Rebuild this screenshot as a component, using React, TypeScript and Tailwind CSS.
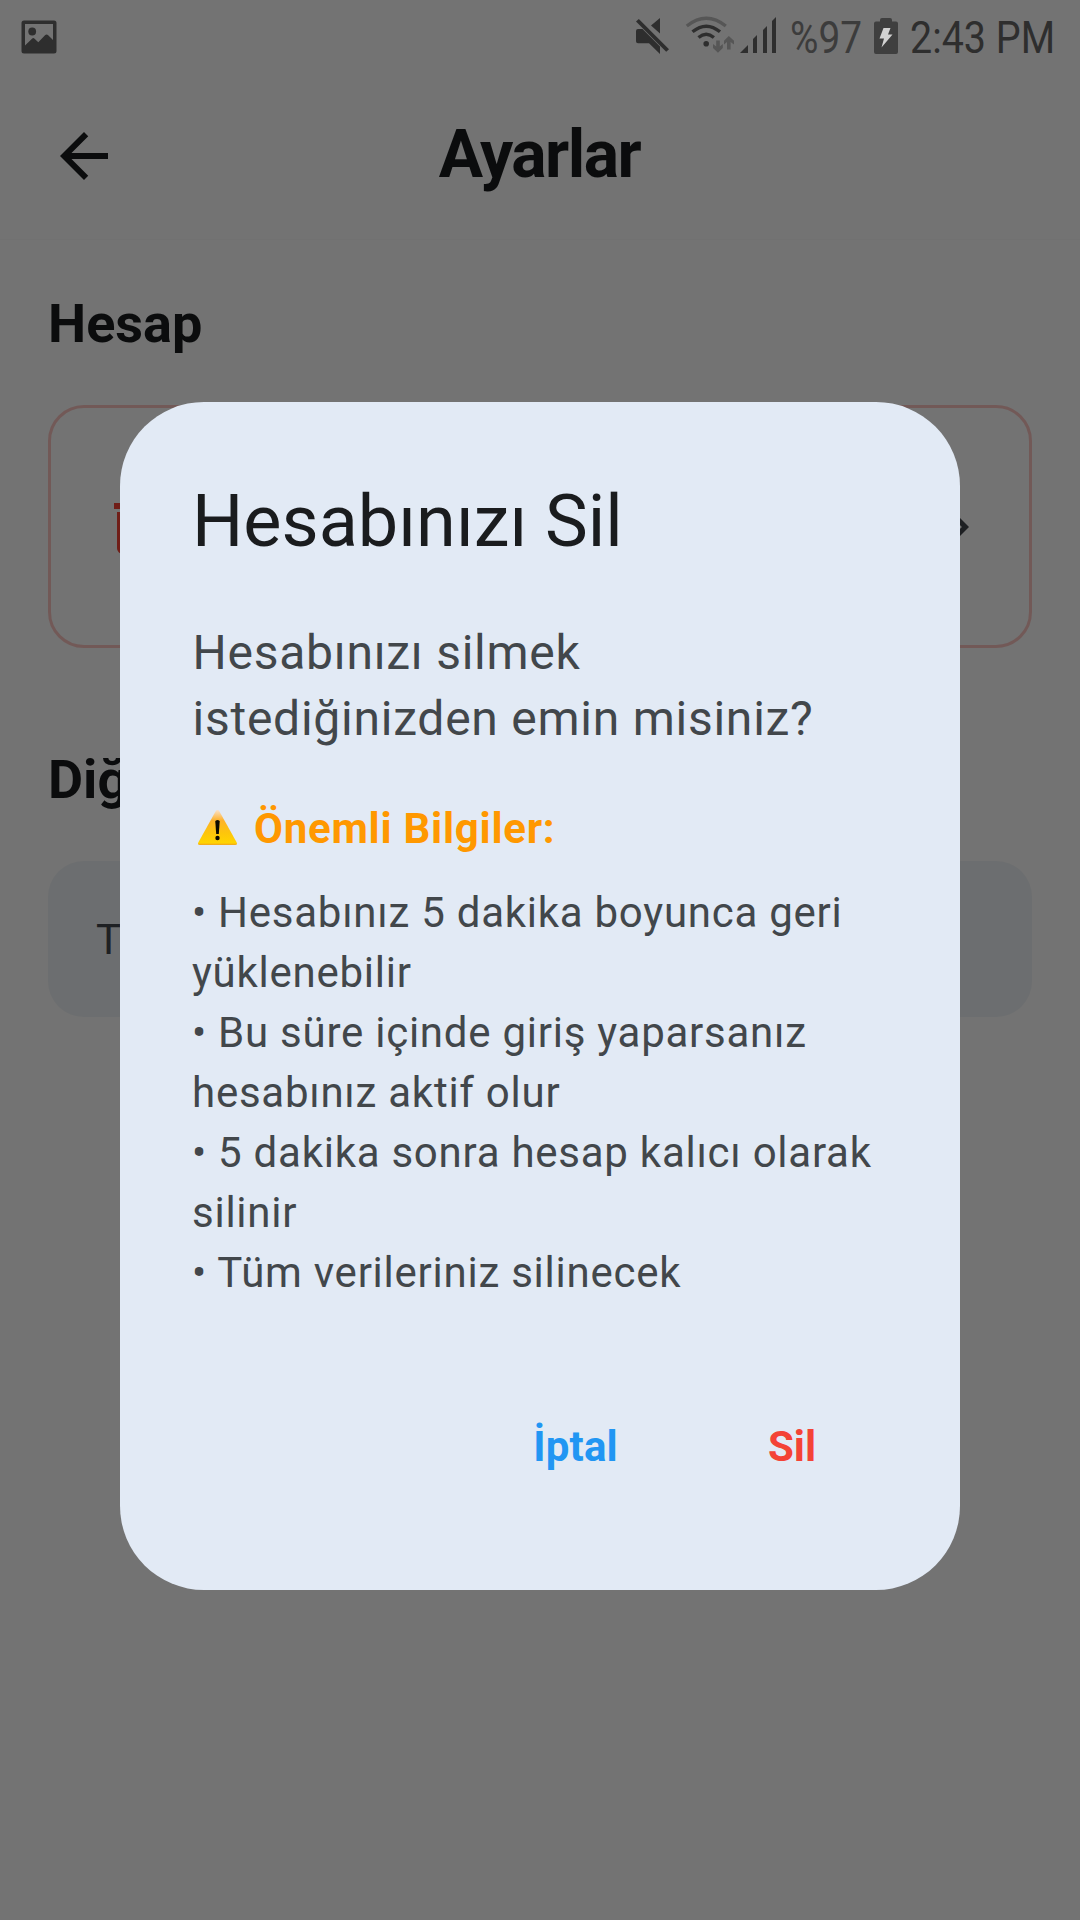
import React from "react";
import { MdArrowBack, MdArrowForwardIos, MdDeleteOutline } from "react-icons/md";

function StatusBar() {
  return (
    <div className="relative z-20 flex h-[72px] items-center justify-between text-[#2e2e2e]">
      <svg className="ml-[21px] h-[35px] w-[36px]" viewBox="0 0 36 35">
        <path
          fill="currentColor"
          fillRule="evenodd"
          d="M3 1.5h30a2.5 2.5 0 0 1 2.500 2.500v28a2.500 2.500 0 0 1-2.500 2.500H3A2.500 2.500 0 0 1 .5 32V4A2.500 2.500 0 0 1 3 1.500zM4 5v21.500l7-6.800q1.300-1.200 2.600 0l3.700 3.500 6.700-7q1.600-1.500 3.200 0l4.800 4.800V5z"
        />
        <circle cx="11.200" cy="12.500" r="3.900" fill="currentColor" />
      </svg>
      <div className="flex h-full">
        <svg className="h-[72px] w-[164px]" viewBox="620 0 164 72">
          <g fill="currentColor">
            <path d="M651 25.500L660 18v15.500zM638 29h4.500L660 46.500V54l-11-10.700h-11q-2 0-2-2V31q0-2 2-2z" />
            <path d="M638.800 19L669 49.200l-2.800 2.600-30.200-30.300z" />
            <circle cx="706.200" cy="43.700" r="2.800" />
            <path d="M740 53l8-8v8zM753 39l4-4v18h-4zM763 30l4-4v27h-4zM772 21l4-4v36h-4z" />
          </g>
          <g fill="none" stroke="currentColor" strokeWidth="3.400">
            <path d="M698.500 37.500q7.700-6.300 15.400 0" />
            <path d="M692.500 31.800q13.800-11.200 27.500 0" />
            <path d="M686.800 26q19.500-15.500 39 0" className="stroke-[#565656]" />
          </g>
          <g className="fill-[#565656]">
            <path d="M716.200 40.500h3.600v6l3-2.500v4l-4.800 4.700-5-4.700v-4l3.200 2.500z" />
            <path d="M727 49.500h3.600V42l3.400 2.500v-3.700l-5.200-4.700-4.800 4.700v3.700l3-2.500z" />
          </g>
        </svg>
        <span className="ml-[6px] block w-[80px] origin-left scale-x-[0.862] text-[45px] leading-[76px] text-[#3c3c3c]">%97</span>
        <svg className="mt-[17px] ml-[4px] h-[38px] w-[24px]" viewBox="0 0 24 38">
          <path fill="#3f3f3f" d="M8 1h8q2 0 2 2v1.500h4q2 0 2 2V35q0 2-2 2H2q-2 0-2-2V6.500q0-2 2-2h4V3q0-2 2-2z" />
          <path fill="#d2d2d2" d="M9.500 11h7L14 17.500h4.500L7.500 30.500l2.500-9H5.500z" />
        </svg>
        <span className="ml-[12px] block w-[170px] origin-left scale-x-[0.876] text-[45px] leading-[76px] whitespace-nowrap">2:43 PM</span>
      </div>
    </div>
  );
}

function WarningIcon() {
  return (
    <svg className="ml-[5px] h-[36px] w-[40px]" viewBox="0 0 40 36">
      <defs>
        <linearGradient id="warn" x1="0" y1="0" x2="0" y2="1">
          <stop offset="0" stopColor="#fbe3cf" />
          <stop offset="0.3" stopColor="#fdb22c" />
          <stop offset="0.65" stopColor="#fdc50c" />
          <stop offset="0.94" stopColor="#ffd400" />
          <stop offset="1" stopColor="#f2a31e" />
        </linearGradient>
      </defs>
      <path d="M18.800 1q1.700-2.500 3.400 0L39.700 32.500q1 2.500-1.500 2.500H2.800Q.3 35 1.300 32.500z" fill="url(#warn)" />
      <path d="M18.300 11.500q0-1.500 2.200-1.500t2.200 1.500l-.9 12.500h-2.600z" fill="#0c0a00" />
      <circle cx="20.500" cy="28" r="2.200" fill="#0c0a00" />
    </svg>
  );
}

function SettingsPage() {
  return (
    <>
      <header className="flex h-[168px] items-center border-b border-[#f7f7f7] px-[48px]">
        <MdArrowBack className="size-[72px]" />
        <h1 className="flex-1 pr-[73px] pb-[2px] text-center text-[66px] leading-[84px] font-bold tracking-[-1.500px]">Ayarlar</h1>
      </header>
      <main className="flex flex-col px-[48px]">
        <h2 className="mt-[48px] text-[54px] leading-[72px] font-bold">Hesap</h2>
        <section className="mt-[45px] flex h-[243px] items-center justify-between rounded-[36px] border-[3px] border-[#f44336]/30 px-[48px]">
          <MdDeleteOutline className="size-[72px] text-[#f44336]" />
          <MdArrowForwardIos className="size-[48px] text-[#42474e]" />
        </section>
        <h2 className="mt-[96px] text-[54px] leading-[72px] font-bold">Diğer</h2>
        <section className="mt-[45px] h-[156px] rounded-[36px] bg-[#ebeff3] px-[48px] pt-[49px] text-[42px] leading-[60px] text-[#42474e]">T</section>
      </main>
    </>
  );
}

function DeleteDialog() {
  return (
    <div role="dialog" className="flex h-[1188px] w-[840px] flex-col rounded-[84px] bg-[#e2eaf5] p-[72px] text-[#42474b]">
      <h3 className="text-[72px] leading-[96px] text-[#1a1c1e]">Hesabınızı Sil</h3>
      <p className="mt-[50px] pl-[0.500px] text-[48px] leading-[66px] tracking-[0.750px]">
        Hesabınızı silmek<br />istediğinizden emin misiniz?
      </p>
      <div className="mt-[46px] flex h-[60px] items-center text-[42px] font-bold tracking-[0.750px] text-[#ff9800]">
        <WarningIcon />
        <span className="ml-[17px]">Önemli Bilgiler:</span>
      </div>
      <p className="mt-[25px] text-[42px] leading-[60px] tracking-[0.750px] whitespace-nowrap">
        • Hesabınız 5 dakika boyunca geri<br />yüklenebilir<br />
        • Bu süre içinde giriş yaparsanız<br />hesabınız aktif olur<br />
        • 5 dakika sonra hesap kalıcı olarak<br />silinir<br />
        • Tüm verileriniz silinecek
      </p>
      <div className="mt-auto flex h-[144px] items-center justify-end text-[42px] font-bold">
        <button className="mr-[150px] tracking-[0.200px] text-[#2196f3]">İptal</button>
        <button className="mr-[72px] text-[#f44336]">Sil</button>
      </div>
    </div>
  );
}

export default function App() {
  return (
    <div lang="tr" className="relative h-[1920px] w-[1080px] overflow-hidden bg-[#fafafa] font-['Roboto',sans-serif] text-[#191c1e]">
      <StatusBar />
      <SettingsPage />
      <div className="absolute inset-0 z-10 flex items-center justify-center bg-black/54 pt-[72px]">
        <DeleteDialog />
      </div>
    </div>
  );
}
